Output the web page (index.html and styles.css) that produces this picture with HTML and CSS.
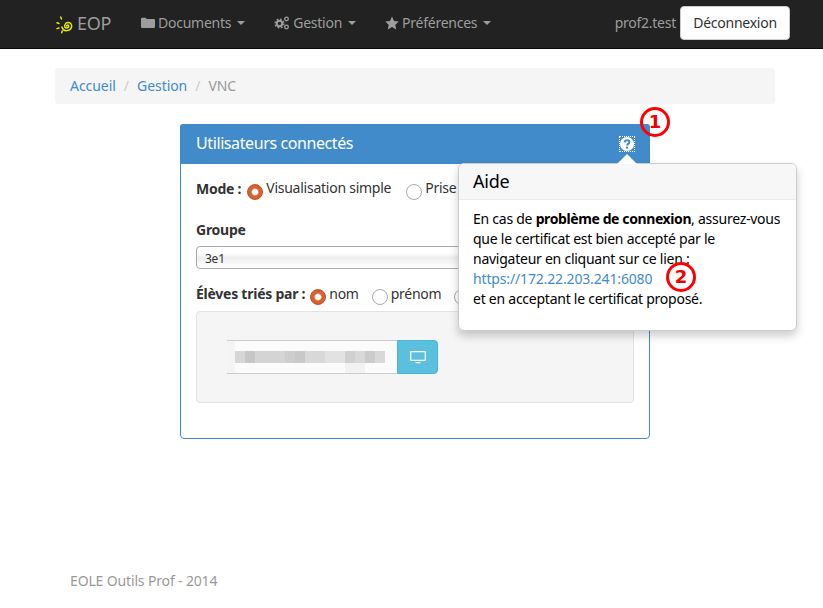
FILE: index.html
```html
<!DOCTYPE html>
<html lang="fr">
<head>
<meta charset="utf-8">
<title>EOP</title>
<link rel="stylesheet" href="styles.css">
</head>
<body>
<nav class="navbar">
  <div class="nav-inner">
    <a class="brand">
      <svg class="logo" width="20" height="20" viewBox="0 0 20 20">
        <g fill="none" stroke="#e8e800" stroke-width="1.5" stroke-linecap="round">
          <path d="M11.700 12a1 1 0 0 1 2 0a2 2 0 0 1-4 0a3.500 3.500 0 0 1 7 0a5 5 0 0 1-9.800 1"/>
          <path d="M5.700 3l.8 2M2 8.700l2 .8M2 14.600l2-.6M6.700 18.700l.5-1.700"/>
        </g>
      </svg>
      <span>EOP</span>
    </a>
    <a class="nav-item">
      <svg class="ico" width="14" height="14" viewBox="0 0 14 14"><path fill="#9d9d9d" d="M0 3q0-1.200 1.200-1.200h3q1 0 1.300 1.200h7.300q1.200 0 1.200 1.200v6.600q0 1.200-1.200 1.200H1.200Q0 12 0 10.800z"/></svg>
      Documents <i class="caret"></i>
    </a>
    <a class="nav-item">
      <svg class="ico" width="16" height="14" viewBox="0 0 16 14"><g fill="none" stroke="#9d9d9d"><circle cx="5.500" cy="7.500" r="2.700" stroke-width="2"/><circle cx="5.500" cy="7.500" r="4.400" stroke-width="1.400" stroke-dasharray="1.800 1.650"/><circle cx="12.500" cy="3" r="1.800" stroke-width="1.300"/><circle cx="12.500" cy="11" r="1.800" stroke-width="1.300"/></g></svg>
      Gestion <i class="caret"></i>
    </a>
    <a class="nav-item">
      <svg class="ico" width="14" height="14" viewBox="0 0 14 14"><path fill="#9d9d9d" d="M7 .6l2 4.300 4.700.6-3.400 3.200.9 4.700L7 11.100l-4.200 2.300.9-4.700L.3 5.500 5 4.900z"/></svg>
      Préférences <i class="caret"></i>
    </a>
    <div class="nav-right">
      <span class="user">prof2.test</span>
      <a class="logout">Déconnexion</a>
    </div>
  </div>
</nav>

<main class="container">
  <ol class="breadcrumb">
    <li><a>Accueil</a></li>
    <li class="sep">/</li>
    <li><a>Gestion</a></li>
    <li class="sep">/</li>
    <li class="current">VNC</li>
  </ol>

  <section class="panel">
    <header class="panel-head">
      <h3>Utilisateurs connectés</h3>
      <span class="help">
        <svg width="14" height="14" viewBox="0 0 14 14"><circle cx="7" cy="7" r="7" fill="#fff"/><path fill="none" stroke="#428bca" stroke-width="2" d="M4.600 5.400q.3-2.200 2.500-2.200 2.300 0 2.300 2 0 1.200-1.300 1.800-1 .5-1 1.500"/><rect x="6" y="9.600" width="2" height="2" fill="#428bca"/></svg>
      </span>
    </header>
    <div class="panel-body">
      <div class="radio-row mode-row">
        <b>Mode :</b>
        <span class="radio on"></span><span class="opt">Visualisation simple</span>
        <span class="radio"></span><span class="opt">Prise</span>
      </div>
      <div class="group">
        <label class="group-label">Groupe</label>
        <div class="select">3e1</div>
      </div>
      <div class="radio-row sort-row">
        <b>Élèves triés par :</b>
        <span class="radio on"></span><span class="opt">nom</span>
        <span class="radio"></span><span class="opt">prénom</span>
        <span class="radio"></span>
      </div>
      <div class="well">
        <div class="student">
          <div class="blurred"></div>
          <a class="screen-btn">
            <svg width="16" height="14" viewBox="0 0 16 14"><path fill="#fff" fill-rule="evenodd" d="M1 1h14q1 0 1 1v8q0 1-1 1H1q-1 0-1-1V2q0-1 1-1zm.3 1.300v7.400h13.400V2.300zM5.500 12h5v1.300h-5z"/></svg>
          </a>
        </div>
      </div>
    </div>
  </section>

  <footer class="footer">EOLE Outils Prof - 2014</footer>
</main>

<aside class="popover">
  <i class="arrow"></i>
  <h4>Aide</h4>
  <p>En cas de <b>problème de connexion</b>, assurez-vous que le certificat est bien accepté par le navigateur en cliquant sur ce lien :<br><a>https://172.22.203.241:6080</a><br>et en acceptant le certificat proposé.</p>
</aside>
<span class="mark mark-1">1</span>
<span class="mark mark-2">2</span>
</body>
</html>
```
FILE: styles.css
```css
* { box-sizing: border-box; }
html, body { margin: 0; height: 100%; }
body {
  position: relative;
  background: #fff;
  color: #333;
  font: 14px/20px "Noto Sans", sans-serif;
  letter-spacing: -0.25px;
  overflow: hidden;
}
a { color: #428bca; text-decoration: none; }

.navbar {
  height: 49px;
  background: #222;
  border-bottom: 1px solid #080808;
}
.nav-inner {
  display: flex;
  align-items: center;
  width: 750px;
  height: 46px;
  margin-left: 55px;
}
.brand {
  display: flex;
  align-items: center;
  gap: 2px;
  width: 86px;
  color: #9d9d9d;
  font-size: 18px;
}
.logo { margin-top: 2px; }
.nav-item {
  display: flex;
  align-items: center;
  gap: 3px;
  color: #9d9d9d;
  margin-right: 29px;
  white-space: nowrap;
}
.caret {
  width: 0;
  height: 0;
  margin-left: 3px;
  border: 4px solid transparent;
  border-top-color: #9d9d9d;
  border-bottom: 0;
}
.nav-right {
  display: flex;
  align-items: center;
  gap: 4px;
  margin-left: auto;
  margin-right: 15px;
}
.user { color: #9d9d9d; }
.logout {
  display: block;
  width: 110px;
  height: 34px;
  color: #333;
  background: #fff;
  border: 1px solid #ccc;
  border-radius: 4px;
  text-align: center;
  line-height: 32px;
}

.container {
  width: 720px;
  margin: 19px 0 0 55px;
}
.breadcrumb {
  display: flex;
  gap: 8px;
  height: 36px;
  margin: 0 0 20px;
  padding: 8px 15px;
  list-style: none;
  background: #f5f5f5;
  border-radius: 4px;
  letter-spacing: -0.05px;
}
.sep { color: #ccc; }
.current { color: #999; }

.panel {
  width: 470px;
  height: 315px;
  margin: 0 auto;
  border: 1px solid #428bca;
  border-radius: 4px;
}
.panel-head {
  display: flex;
  align-items: center;
  justify-content: space-between;
  height: 40px;
  margin: -1px -1px 0;
  padding: 0 16px 2px;
  background: #428bca;
  border-radius: 3px 3px 0 0;
  color: #fff;
}
.panel-head h3 {
  margin: 0;
  font-size: 16px;
  font-weight: 400;
  line-height: 18px;
  letter-spacing: -0.4px;
}
.help {
  display: flex;
  padding: 1px;
  margin-top: 1px;
  margin-right: -1px;
  outline: 1px dotted #fff;
  outline-offset: -1px;
}
.panel-body { padding: 15px; }
.radio-row {
  display: flex;
  align-items: flex-start;
  height: 20px;
  white-space: nowrap;
}
.radio-row b { margin-right: 6px; color: #333; }
.radio {
  flex: none;
  width: 16px;
  height: 16px;
  margin: 5px 3px 0 0;
  background: #fff;
  border: 1px solid #aaa;
  border-radius: 50%;
}
.radio.on {
  border: 1px solid #b9552a;
  background: radial-gradient(circle, #fff 0 2.500px, #eab79c 3.200px, #d5622f 4px);
}
.opt { margin-right: 15px; margin-top: -1px; }
.sort-row b { margin-right: 5px; }
.sort-row .opt { margin-right: 13px; margin-top: 0; }
.group { margin-top: 21px; }
.group-label { display: block; font-weight: 700; line-height: 20px; }
.select {
  height: 23px;
  margin-top: 6px;
  padding: 3px 8px;
  font-size: 12px;
  line-height: 17px;
  border: 1px solid #aaa;
  border-radius: 4px;
  background: linear-gradient(#fff 30%, #eee 50%, #fff 100%);
}
.sort-row { margin-top: 15px; }
.well {
  height: 92px;
  margin-top: 7px;
  padding: 28px 30px;
  background: #f5f5f5;
  border: 1px solid #e3e3e3;
  border-radius: 4px;
}
.student { display: flex; height: 34px; }
.blurred {
  width: 170px;
  border-block: 1px solid #ccc;
  background:
    linear-gradient(90deg, #fff0 0 118px, #f2f2f2 118px 138px, #fff0 138px) 0 22px / 100% 11px no-repeat,
    linear-gradient(90deg, #fff0 0 8px, #d6d6d6 8px 18px, #c6c6c6 18px 28px, #d4d4d4 28px 58px, #cdcdcd 58px 68px, #c8c8c8 68px 78px, #d8d8d8 78px 98px, #e2e2e2 98px 118px, #d0d0d0 118px 128px, #d8d8d8 128px 138px, #cbcbcb 138px 148px, #d8d8d8 148px 158px, #fff0 158px) 0 10px / 100% 12px no-repeat,
    linear-gradient(90deg, #f4f4f4 0 8px, #fbfbfb 8px);
}
.screen-btn {
  display: flex;
  align-items: center;
  justify-content: center;
  width: 41px;
  background: #5bc0de;
  border: 1px solid #46b8da;
  border-radius: 0 4px 4px 0;
}
.footer {
  margin: 132px 0 0 15px;
  color: #999;
  letter-spacing: -0.15px;
}

.popover {
  position: absolute;
  left: 458px;
  top: 163px;
  width: 339px;
  height: 168px;
  color: #000;
  background: #fff;
  border: 1px solid #ccc;
  border-radius: 6px;
  box-shadow: 0 5px 10px rgba(0, 0, 0, .2);
}
.arrow {
  position: absolute;
  left: 158px;
  top: -10px;
  width: 0;
  height: 0;
  border: 10px solid transparent;
  border-top: 0;
  border-bottom-color: #fff;
}
.popover h4 {
  height: 36px;
  margin: 0;
  padding: 7px 14px;
  font-size: 18px;
  font-weight: 400;
  line-height: 20px;
  background: #f7f7f7;
  border-bottom: 1px solid #ebebeb;
  border-radius: 5px 5px 0 0;
}
.popover p { margin: 0; padding: 9px 14px; }
.popover b { letter-spacing: -0.4px; }
.popover a { letter-spacing: -0.15px; }
.mark {
  position: absolute;
  width: 30px;
  height: 30px;
  border: 3px solid #f00;
  border-radius: 50%;
  color: #e00;
  font: 700 18px/24px "DejaVu Sans", sans-serif;
  letter-spacing: 0;
  text-align: center;
}
.mark-1 { left: 640px; top: 107px; }
.mark-2 { left: 666px; top: 262px; }
```
